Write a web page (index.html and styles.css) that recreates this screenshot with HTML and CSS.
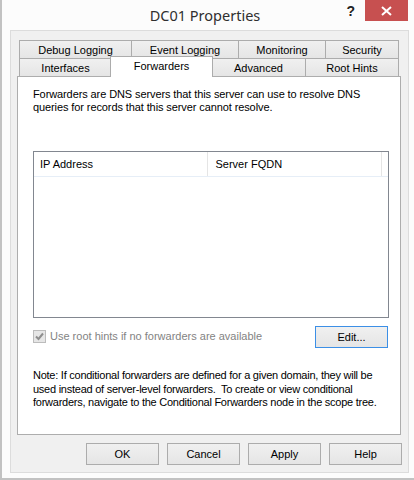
FILE: index.html
```html
<!DOCTYPE html>
<html>
<head>
<meta charset="utf-8">
<link rel="stylesheet" href="styles.css">
</head>
<body>
<div class="window">
  <div class="titlebar">
    <div class="spacer"></div>
    <div class="title">DC01 Properties</div>
    <div class="controls">
      <div class="help">?</div>
      <div class="close">
        <svg width="11" height="10" viewBox="0 0 11 10"><path d="M1 1 L10 9 M10 1 L1 9" stroke="#fff" stroke-width="2" fill="none"/></svg>
      </div>
    </div>
  </div>
  <div class="client">
    <div class="tabs">
      <div class="tabrow">
        <div class="tab w113">Debug Logging</div>
        <div class="tab w108">Event Logging</div>
        <div class="tab w88">Monitoring</div>
        <div class="tab w74">Security</div>
      </div>
      <div class="tabrow">
        <div class="tab w93">Interfaces</div>
        <div class="tab active w103">Forwarders</div>
        <div class="tab w95 after-active">Advanced</div>
        <div class="tab w94">Root Hints</div>
      </div>
    </div>
    <div class="panel">
      <p class="desc">Forwarders are DNS servers that this server can use to resolve DNS<br>queries for records that this server cannot resolve.</p>
      <div class="list">
        <div class="list-head">
          <div class="col col1">IP Address</div>
          <div class="col col2">Server FQDN</div>
          <div class="col col3"></div>
        </div>
      </div>
      <div class="check-row">
        <label class="check">
          <span class="box">
            <svg width="11" height="11" viewBox="0 0 11 11"><path d="M2 5.5 L4.5 8 L9 2.5" stroke="#8e8e8e" stroke-width="2" fill="none"/></svg>
          </span>
          <span class="check-label">Use root hints if no forwarders are available</span>
        </label>
        <div class="btn default edit">Edit...</div>
      </div>
      <p class="note">Note: If conditional forwarders are defined for a given domain, they will be<br>used instead of server-level forwarders.&nbsp; To create or view conditional<br>forwarders, navigate to the Conditional Forwarders node in the scope tree.</p>
    </div>
    <div class="buttons">
      <div class="btn">OK</div>
      <div class="btn">Cancel</div>
      <div class="btn">Apply</div>
      <div class="btn">Help</div>
    </div>
  </div>
</div>
</body>
</html>
```
FILE: styles.css
```css
* { box-sizing: border-box; }
html, body { margin: 0; padding: 0; }
body {
  width: 414px;
  height: 480px;
  background: #fcfcfc;
  font-family: "Liberation Sans", Arial, sans-serif;
  font-size: 11px;
  color: #000;
  overflow: hidden;
}
.window {
  width: 414px;
  height: 480px;
  border-left: 2px solid #c2c2c2;
  border-bottom: 2px solid #c2c2c2;
  background: #fcfcfc;
}
.titlebar {
  height: 30px;
  display: grid;
  grid-template-columns: 1fr auto 1fr;
  align-items: start;
  padding-right: 6px;
}
.title {
  font-family: "Noto Sans", "Open Sans", sans-serif;
  font-size: 14.5px;
  color: #2f2f2f;
  line-height: 20px;
  padding-top: 5px;
}
.controls {
  display: flex;
  justify-content: flex-end;
  align-items: flex-start;
}
.help {
  font-family: "Liberation Sans", Arial, sans-serif;
  font-weight: bold;
  font-size: 14px;
  color: #222;
  line-height: 16px;
  padding-top: 3px;
  margin-right: 10px;
}
.close {
  width: 43px;
  height: 21px;
  background: #c75050;
  display: flex;
  align-items: center;
  justify-content: center;
}
.client {
  margin-left: 8px;
  width: 399px;
  height: 443px;
  border: 1px solid #dcdcdc;
  background: #f0f0f0;
  display: flex;
  flex-direction: column;
}
.tabs {
  margin-top: 9px;
  margin-left: 8px;
}
.tabrow {
  display: flex;
  height: 18px;
}
.tab {
  height: 18px;
  border: 1px solid #acacac;
  border-bottom: none;
  margin-left: -1px;
  background: linear-gradient(#f0f0f0, #e5e5e5);
  text-align: center;
  line-height: 18px;
  white-space: nowrap;
}
.tab:first-child { margin-left: 0; }
.tab.active {
  position: relative;
  z-index: 1;
  margin-left: -2px;
  margin-top: -2px;
  height: 21px;
  background: #fff;
  line-height: 18px;
}
.tab.after-active { margin-left: -2px; }
.w113 { width: 113px; }
.w108 { width: 108px; }
.w88 { width: 88px; }
.w74 { width: 74px; }
.w93 { width: 93px; }
.w103 { width: 103px; }
.w95 { width: 95px; }
.w94 { width: 94px; }
.panel {
  margin-left: 6px;
  width: 384px;
  height: 359px;
  border: 1px solid #adadad;
  background: #fff;
  padding: 11px 11px 0 15px;
  display: flex;
  flex-direction: column;
}
.desc {
  margin: 0;
  line-height: 13px;
  white-space: nowrap;
  letter-spacing: -0.1px;
}
.list {
  margin-top: 37px;
  height: 167px;
  border: 1px solid #828790;
  background: #fff;
}
.list-head {
  display: flex;
  height: 25px;
  border-bottom: 1px solid #e6eef7;
}
.col {
  line-height: 25px;
  padding-left: 6px;
  border-right: 1px solid #e5e5e5;
}
.col1 { width: 177px; }
.col2 { width: 176px; padding-left: 7px; }
.col3 { flex: 1; border-right: none; }
.check-row {
  margin-top: 8px;
  display: flex;
  align-items: center;
  justify-content: space-between;
}
.check {
  display: flex;
  align-items: center;
  color: #838383;
  margin-top: -2px;
}
.box {
  width: 13px;
  height: 13px;
  border: 1px solid #bcbcbc;
  background: #e6e6e6;
  display: flex;
  align-items: center;
  justify-content: center;
  margin-right: 4px;
}
.btn {
  width: 73px;
  height: 22px;
  border: 1px solid #acacac;
  background: linear-gradient(#f0f0f0, #e5e5e5);
  text-align: center;
  line-height: 20px;
}
.btn.default { border-color: #3c8fe6; }
.edit { margin-right: 1px; }
.note {
  margin: 21px 0 0 0;
  line-height: 13.5px;
  white-space: nowrap;
  letter-spacing: -0.25px;
}
.buttons {
  margin-top: 8px;
  display: flex;
  justify-content: flex-end;
  gap: 8px;
  padding-right: 6px;
}
```
